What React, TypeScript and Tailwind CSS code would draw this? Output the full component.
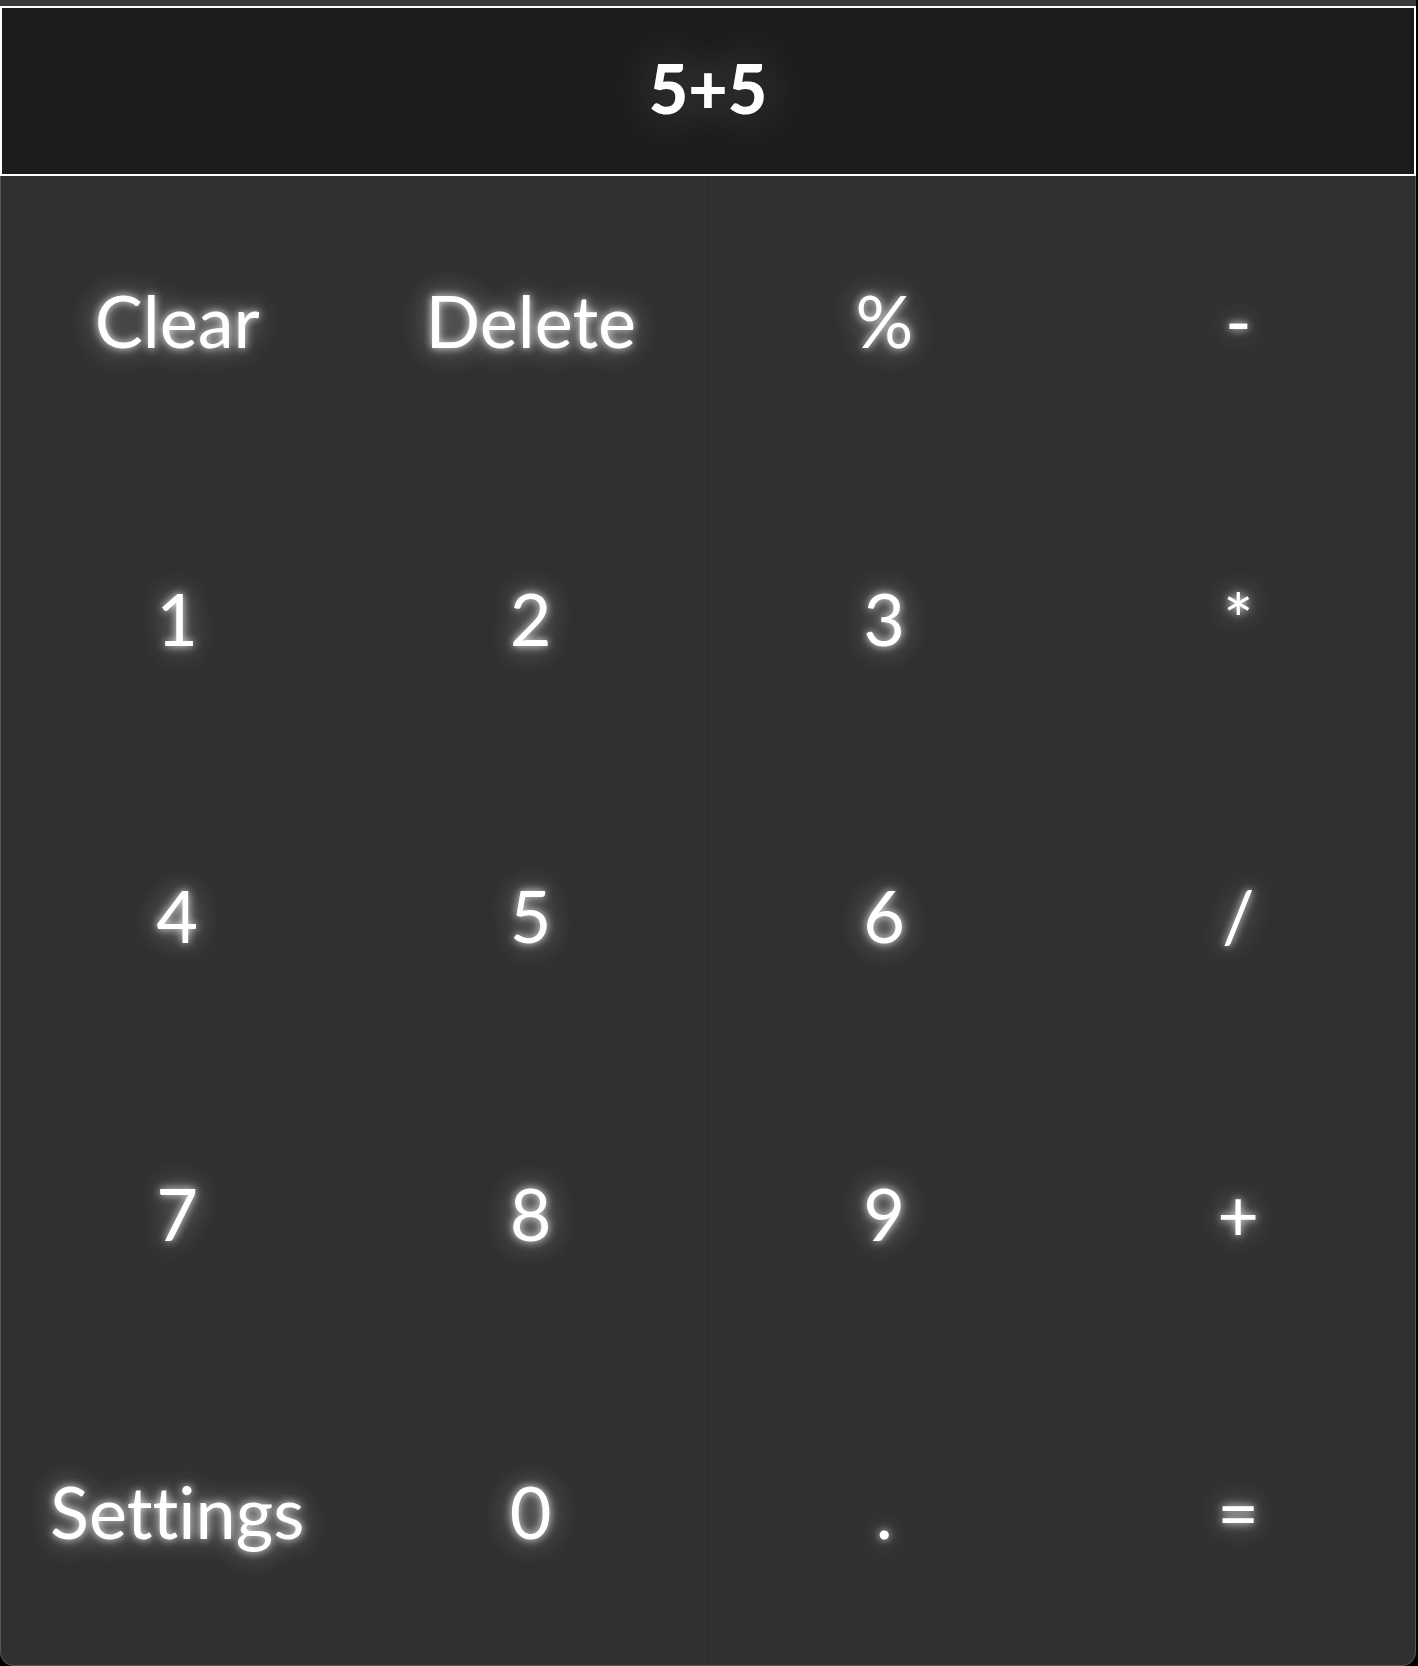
const keys = [
  "Clear", "Delete", "%", "-",
  "1", "2", "3", "*",
  "4", "5", "6", "/",
  "7", "8", "9", "+",
  "Settings", "0", ".", "=",
];

function Key({label, last}: {label: string; last: boolean}) {
  return (
    <button
      className={
        "flex items-center justify-center pb-[10px] text-white text-[72px] leading-none font-normal [font-variant-ligatures:none] [text-shadow:0_0_8px_rgba(255,255,255,0.9),0_0_28px_rgba(255,255,255,0.6),0_0_60px_rgba(255,255,255,0.15)] " +
        (last ? "" : "border-r border-[#2c2c2c]")
      }
    >
      {label}
    </button>
  );
}

export default function App() {
  return (
    <div className="w-[1418px] h-[1666px] bg-black flex font-['Lato','Noto_Sans',sans-serif]">
      <div className="w-[1416px] h-full flex flex-col">
        <div className="h-[6px] bg-[#3a3a3a]" />
        <div className="h-[170px] border-2 border-white bg-[#1c1c1c] flex items-center justify-center pb-[6px]">
          <span className="text-white text-[68px] font-black leading-none [text-shadow:0_0_50px_rgba(255,255,255,0.3)]">
            5+5
          </span>
        </div>
        <div className="flex-1 grid grid-cols-4 grid-rows-5 bg-[#303030] border-x border-b border-[#555555] rounded-b-[14px] overflow-hidden">
          {keys.map((k, i) => (
            <Key key={k} label={k} last={i % 4 === 3} />
          ))}
        </div>
      </div>
    </div>
  );
}
